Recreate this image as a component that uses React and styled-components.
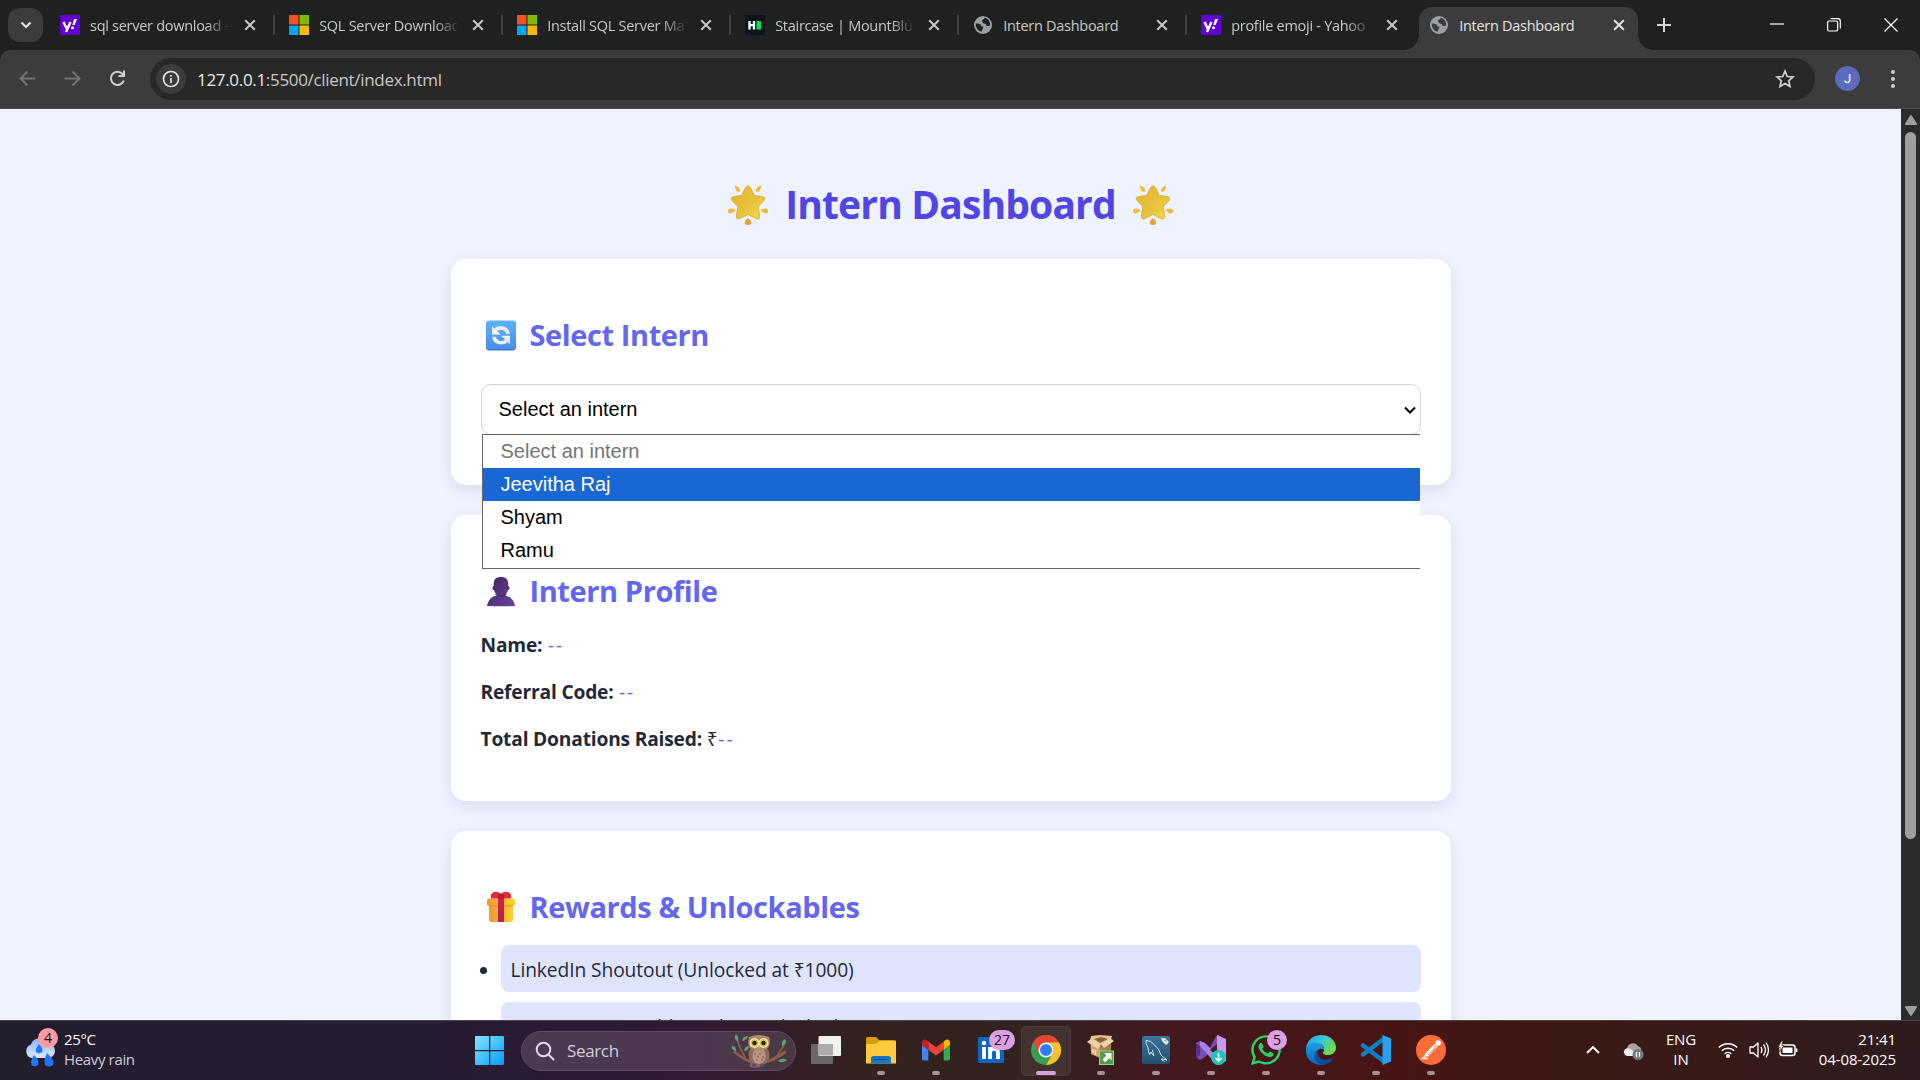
import React from "react";
import styled, { createGlobalStyle, css } from "styled-components";
import { FaWhatsapp } from "react-icons/fa";

const ui = `"Open Sans", "Noto Sans", sans-serif`;

const GlobalStyle = createGlobalStyle`
  * { box-sizing: border-box; }
  html, body { margin: 0; padding: 0; overflow: hidden; background: #1f2120; }
  h1, h2, p, ul { margin: 0; padding: 0; }
  svg { display: block; flex: none; overflow: visible; }
`;

const Screen = styled.div`
  width: 1920px;
  height: 1080px;
  display: flex;
  flex-direction: column;
  overflow: hidden;
  font-family: ${ui};
`;

/* ---------- browser chrome ---------- */

const TabStrip = styled.header`
  height: 50px;
  flex: none;
  display: flex;
  padding-left: 8px;
  background: #1f2120;
  color: #c7c7c7;
`;

const TabSearch = styled.div`
  width: 35px;
  height: 34px;
  margin: 8px 3px 0 0;
  border-radius: 12px;
  background: #3c3c3c;
  display: flex;
  align-items: center;
  justify-content: center;
`;

const TabTitle = styled.div`
  width: ${(p) => p.$width}px;
  overflow: hidden;
  white-space: nowrap;
  font-size: 14.5px;
  letter-spacing: -0.28px;
  line-height: 24px;
  padding-top: 1px;
  margin-right: 15px;
  ${(p) => p.$fade && css`mask-image: linear-gradient(90deg, #000 115px, transparent 141px);`}
`;

const Tab = styled.div`
  width: 228px;
  height: 50px;
  flex: none;
  display: flex;
  align-items: center;
  position: relative;
  padding-left: 14px;
  &:nth-child(2) { width: 229.2px; }
  ${(p) =>
    p.$active &&
    css`
      color: #e3e3e3;
      isolation: isolate;
      &::before {
        content: "";
        position: absolute;
        z-index: -1;
        left: 4px;
        right: 5px;
        top: 7px;
        bottom: 0;
        border-radius: 13px 13px 0 0;
        background: #3c3c3c;
      }
      &::after {
        content: "";
        position: absolute;
        z-index: -1;
        left: -11px;
        right: -10px;
        bottom: 0;
        height: 15px;
        background:
          radial-gradient(circle at 0 0, transparent 14.5px, #3c3c3c 15px) left / 15px 15px no-repeat,
          radial-gradient(circle at 100% 0, transparent 14.5px, #3c3c3c 15px) right / 15px 15px no-repeat;
      }
    `}
`;

const Favicon = styled.div`
  width: 20px;
  height: 20px;
  margin-right: 10px;
  flex: none;
  display: flex;
`;

const TabDivider = styled.div`
  width: 2px;
  height: 20px;
  margin-left: 17px;
  border-radius: 1px;
  background: #414241;
`;

const NewTab = styled.div`
  width: 42px;
  display: flex;
  align-items: center;
  justify-content: center;
`;

const WindowControls = styled.div`
  margin-left: auto;
  display: flex;
  align-items: center;
  gap: 43px;
  padding-right: 22px;
`;

const ToolbarBack = styled.div`
  flex: none;
  background: #1f2120;
`;

const Toolbar = styled.div`
  height: 59px;
  display: flex;
  align-items: center;
  padding: 0 24px 1px 18px;
  background: #3c3c3c;
  border-bottom: 1px solid #4b4b4d;
  border-radius: 10px 10px 0 0;
`;

const NavButtons = styled.div`
  width: 132px;
  display: flex;
  align-items: center;
  gap: 26px;
`;

const Omnibox = styled.div`
  flex: 1;
  height: 42px;
  border-radius: 21px;
  background: #282828;
  display: flex;
  align-items: center;
  padding: 0 20px 0 6px;
`;

const SiteInfo = styled.div`
  width: 30px;
  height: 30px;
  border-radius: 50%;
  background: #3c3c3c;
  display: flex;
  align-items: center;
  justify-content: center;
  margin-right: 11px;
`;

const Url = styled.div`
  flex: 1;
  padding-top: 1px;
  font-size: 17px;
  letter-spacing: -0.32px;
  color: #c7c7c7;
  b { font-weight: 400; color: #e8e8e8; }
`;

const Avatar = styled.div`
  width: 25px;
  height: 25px;
  margin: 0 30px 0 20px;
  border-radius: 50%;
  background: #5c6bc0;
  color: #fff;
  font: 13px/25px Roboto, sans-serif;
  text-align: center;
`;

/* ---------- page ---------- */

const Viewport = styled.div`
  height: 911px;
  flex: none;
  display: flex;
  overflow: hidden;
`;

const Page = styled.main`
  width: 1901px;
  height: 911px;
  overflow: hidden;
  display: flex;
  flex-direction: column;
  align-items: center;
  gap: 30px;
  padding-top: 69px;
  background: #eff3ff;
  color: #1f2937;
`;

const Title = styled.h1`
  display: flex;
  align-items: center;
  gap: 17px;
  height: 51px;
  font-size: 39px;
  line-height: 51px;
  letter-spacing: -0.85px;
  color: #4f46e5;
  white-space: nowrap;
  svg { margin-top: 2px; }
`;

const Card = styled.section`
  width: 1000px;
  height: ${(p) => p.$height}px;
  flex: none;
  padding: 55px 30px 0;
  border-radius: 15px;
  background: #fff;
  box-shadow: 0 5px 15px rgba(30, 30, 80, 0.1);
`;

const Heading = styled.h2`
  display: flex;
  align-items: center;
  height: 41px;
  gap: 13px;
  padding-left: 4px;
  font-size: 29px;
  line-height: 41px;
  letter-spacing: -0.4px;
  color: #6366f1;
  white-space: nowrap;
  svg { margin-top: 2px; }
`;

const SelectWrap = styled.div`
  position: relative;
  margin-top: 29px;
  font-family: "Liberation Sans", Arial, sans-serif;
  font-size: 20px;
  color: #000;
`;

const SelectBox = styled.div`
  height: 51px;
  border: 1px solid #d1d5db;
  border-radius: 10px;
  padding: 0 4px 0 17px;
  display: flex;
  align-items: center;
  justify-content: space-between;
  background: #fff;
`;

const Options = styled.div`
  position: absolute;
  z-index: 2;
  left: 1px;
  right: 1px;
  top: 50px;
  padding-bottom: 1px;
  border: 1px solid #666;
  border-right: 0;
  background: #fff;
`;

const Option = styled.div`
  height: 33px;
  padding-left: 18px;
  line-height: 33px;
  color: ${(p) => (p.$state === "disabled" ? "#757575" : p.$state === "hover" ? "#fff" : "#000")};
  background: ${(p) => (p.$state === "hover" ? "#1967d2" : "#fff")};
`;

const Fields = styled.div`
  display: flex;
  flex-direction: column;
  gap: 20px;
  margin-top: 20px;
`;

const Field = styled.p`
  font-size: 19.2px;
  line-height: 28px;
  height: 27px;
  letter-spacing: -0.1px;
  b { letter-spacing: -0.19px; }
  span { color: #6366f1; letter-spacing: 2px; margin-left: 0.5px; }
`;

const Rewards = styled.ul`
  list-style: none;
  display: flex;
  flex-direction: column;
  gap: 10px;
  margin: 18px 0 0 -1px;
`;

const Reward = styled.li`
  display: flex;
  align-items: center;
  gap: 14px;
  &::before {
    content: "";
    width: 7px;
    height: 7px;
    margin-top: 4px;
    border-radius: 50%;
    background: #1f2937;
  }
`;

const RewardText = styled.div`
  flex: 1;
  height: 47px;
  padding-left: 10px;
  border-radius: 8px;
  background: #e0e5ff;
  font-size: 19.2px;
  line-height: 49px;
  letter-spacing: -0.09px;
`;

const Scrollbar = styled.div`
  width: 19px;
  height: 911px;
  padding: 6px 0 4px;
  background: #2b2b2b;
  display: flex;
  flex-direction: column;
  align-items: center;
`;

const Thumb = styled.div`
  width: 11px;
  height: 707px;
  margin: 7px 0 auto;
  border-radius: 6px;
  background: #9f9f9f;
`;

/* ---------- taskbar ---------- */

const Taskbar = styled.footer`
  height: 60px;
  flex: none;
  display: flex;
  align-items: center;
  padding: 0 24px;
  border-top: 1px solid #4c4649;
  color: #fff;
  background: linear-gradient(90deg, #231e2e 0, #241c31 350px, #2b1a34 600px, #341b30 730px, #33221f 860px, #32231f 1030px, #43181f 1170px, #471513 1380px, #3f1712 1500px, #351b19 1740px, #2e1b1f 1920px);
`;

const Weather = styled.div`
  display: flex;
  align-items: center;
  gap: 5px;
  width: 451px;
`;

const Stack = styled.div`
  display: flex;
  flex-direction: column;
  align-items: ${(p) => p.$align || "flex-start"};
  margin-left: ${(p) => (p.$align === "flex-end" ? "auto" : "0")};
  padding-bottom: 3px;
  font-size: 15px;
  line-height: 20px;
  letter-spacing: ${(p) => p.$track || -0.1}px;
  white-space: nowrap;
  span { color: #cfcbd2; }
`;

const SearchPill = styled.div`
  width: 275px;
  height: 40px;
  margin: 0 12px 0 16px;
  padding: 0 8px 0 13px;
  border: 1px solid #5e4d62;
  border-radius: 20px;
  background: linear-gradient(90deg, #493a51, #4d3650 60%, #4a3843);
  display: flex;
  align-items: center;
  color: #d4ccd6;
  font-size: 17px;
  letter-spacing: -0.35px;
  b { flex: 1; font-weight: 400; margin-left: 12px; }
`;

const Apps = styled.div`
  display: flex;
  gap: 5px;
  margin-left: -7px;
`;

const AppButton = styled.div`
  position: relative;
  width: 50px;
  height: 50px;
  padding-bottom: 1px;
  border-radius: 5px;
  display: flex;
  align-items: center;
  justify-content: center;
  border: 1px solid ${(p) => (p.$run === "active" ? "#4d3c3a" : "transparent")};
  background: ${(p) => (p.$run === "active" ? "#433330" : "transparent")};
  &::after {
    content: "";
    display: ${(p) => (p.$run ? "block" : "none")};
    position: absolute;
    bottom: 0;
    width: ${(p) => (p.$run === "active" ? 20 : 8)}px;
    height: 4px;
    border-radius: 2px;
    background: ${(p) => (p.$run === "active" ? "#d99fe0" : "#a09494")};
  }
`;

const Badge = styled.div`
  position: absolute;
  left: ${(p) => p.$x}px;
  top: ${(p) => p.$y}px;
  min-width: 20px;
  height: 20px;
  padding: 0 5px;
  border-radius: 10px;
  background: ${(p) => p.$color || "#dc9fe3"};
  color: #16101a;
  font-size: 14px;
  line-height: 20px;
  text-align: center;
`;

const WeatherIcon = styled.div`
  position: relative;
  width: 35px;
  height: 35px;
`;

const Tray = styled.div`
  margin-left: auto;
  display: flex;
  align-items: center;
`;

const TraySlot = styled.div`
  width: ${(p) => p.$w}px;
  padding-bottom: ${(p) => p.$lift || 0}px;
  display: flex;
  justify-content: center;
`;

/* ---------- icons ---------- */

const Cross = () => (
  <svg width="12" height="12" viewBox="0 0 12 12" stroke="currentColor" strokeWidth="2">
    <path d="M1.200 1.200l9.600 9.600M10.800 1.200l-9.600 9.600" />
  </svg>
);

const YahooIcon = () => (
  <svg width="20" height="20" viewBox="0 0 20 20">
    <rect width="20" height="20" fill="#6001d2" />
    <path d="M3.5 7l3.2 6.5M10.5 7L6 17" stroke="#fff" strokeWidth="2.5" fill="none" />
    <path d="M14 4h3l-2.3 6h-2.3z" fill="#fff" />
    <circle cx="12.5" cy="12.8" r="1.5" fill="#fff" />
  </svg>
);

const MicrosoftIcon = () => (
  <svg width="20" height="20" viewBox="0 0 20 20">
    <path fill="#f25022" d="M0 0h9.5v9.5H0z" />
    <path fill="#7fba00" d="M10.5 0H20v9.5h-9.5z" />
    <path fill="#00a4ef" d="M0 10.5h9.5V20H0z" />
    <path fill="#ffb900" d="M10.5 10.5H20V20h-9.5z" />
  </svg>
);

const HackerIcon = () => (
  <svg width="20" height="20" viewBox="0 0 20 20">
    <rect width="20" height="20" fill="#0e141e" />
    <path d="M4.5 6v8.5M9 6v8.5M4.5 10.2H9" stroke="#fff" strokeWidth="2.3" />
    <path d="M11.5 6H16v8.5h-4.5z" fill="#05e05f" />
  </svg>
);

const GlobeIcon = ({ ink }) => (
  <svg width="20" height="20" viewBox="0 0 20 20">
    <circle cx="10" cy="10" r="9" fill="#9aa0a6" />
    <path
      fill={ink}
      d="M2.8 8.4c1.6 0 3.5.2 4.6 1.2.8.7.5 1.8 1.7 2 .9.1 1.4.3 1.2 1.2-.2.8-1 1-1.1 1.8 0 .6-.1 1.9-.6 1.9C5 16 2.600 12.8 2.800 8.400zM11.300 2.700c.3 1-.3 1.500-1.200 1.700-1 .3-1 .9-1 1.600 0 .6.700.8.6 1.500-.1.8.8 1.300 1.900 1.200 1 0 1.500.4 1.600 1.200.2 1 1 1 2 1 1 0 1.400-.3 2-.9C17.300 6.300 15 3.300 11.300 2.700z"
    />
  </svg>
);

const StarEmoji = () => (
  <svg width="40" height="40" viewBox="0 0 40 40">
    <defs>
      <linearGradient id="sg" x1="0" y1="0" x2="1" y2="1">
        <stop offset="0" stopColor="#e9b52f" />
        <stop offset=".55" stopColor="#e7c13c" />
        <stop offset="1" stopColor="#f9de3a" />
      </linearGradient>
    </defs>
    <g fill="#f2ba35">
      <path d="M7 2q-1-1.500.8-1.300l2.500 1.500q2.500 2.500 1.800 4-1.500 1.300-4-.5zM33 2q1-1.500-.8-1.300l-2.500 1.500q-2.500 2.500-1.800 4 1.500 1.300 4-.5zM0 27q-.5-3.500 3-3.500 4 .3 4 1.800t-4 3Q.5 29 0 27zM40 27q.5-3.500-3-3.500-4 .3-4 1.800t4 3q2.500.7 3-1.300z" />
      <path fill="#e0a336" d="M20 33.500q2 0 3.300 4Q23.300 40 20 40t-3.300-2.500q1.300-4 3.300-4z" />
    </g>
    <path
      fill="url(#sg)"
      stroke="#d9a02f"
      strokeWidth=".7"
      strokeLinejoin="round"
      d="M17.500 2.500q2.500-3.500 5 0l3.800 7.800 8 1.200q4.200 1 1.600 4.200l-5.700 6 1.500 9.300q.2 4.400-3.800 2.600L20 29.500l-7.900 4.100q-4 1.800-3.800-2.600l1.500-9.300-5.700-6q-2.600-3.200 1.600-4.200l8-1.200z"
    />
  </svg>
);

const RefreshEmoji = () => (
  <svg width="32" height="32" viewBox="0 0 32 32">
    <defs>
      <linearGradient id="rb" x1="0" y1="0" x2="0" y2="1">
        <stop offset="0" stopColor="#5ab4fb" />
        <stop offset="1" stopColor="#4b8ee8" />
      </linearGradient>
    </defs>
    <rect x="1" y="1" width="30" height="29.500" rx="3.500" fill="#3f77d0" />
    <rect x="1" y=".5" width="30" height="28.500" rx="3.500" fill="url(#rb)" />
    <g fill="none" stroke="#eef0ff" strokeWidth="3.600">
      <path d="M10.500 9.800c4.500-3.500 11.500-2 12.700 4" />
      <path d="M21.500 20.800c-4.500 3.500-11.500 2-12.700-4" />
    </g>
    <path fill="#eef0ff" d="M7 6.300v8.500h9zM25 24.300v-8.500h-9z" />
  </svg>
);

const PersonEmoji = () => (
  <svg width="32" height="32" viewBox="0 0 32 32">
    <defs>
      <linearGradient id="pg" x1="0" y1="0" x2="1" y2="1">
        <stop offset="0" stopColor="#3e2660" />
        <stop offset="1" stopColor="#6a42a0" />
      </linearGradient>
    </defs>
    <path
      fill="url(#pg)"
      d="M16 1c5.500 0 7.500 2.500 7.300 9 1.700 0 1.700 4-.3 4-.8 3-2.500 4.500-3.300 5.500 5.500.7 9.300 4.500 10.300 10.500q-14 .5-28 0c1-6 4.800-9.800 10.300-10.500C11.500 18.500 9.800 17 9 14c-2 0-2-4-.3-4C8.500 3.500 10.500 1 16 1z"
    />
    <path d="M10.500 18.500q5.500 3.500 11 0" stroke="#35205a" strokeWidth="1" fill="none" />
  </svg>
);

const GiftEmoji = () => (
  <svg width="32" height="32" viewBox="0 0 32 32">
    <defs>
      <linearGradient id="gg">
        <stop offset="0" stopColor="#ee9a35" />
        <stop offset="1" stopColor="#fbd32b" />
      </linearGradient>
      <linearGradient id="gr" x1="0" y1="0" x2="0" y2="1">
        <stop offset="0" stopColor="#d5243c" />
        <stop offset="1" stopColor="#b61d66" />
      </linearGradient>
    </defs>
    <g transform="translate(0 -1)">
      <rect x="4" y="12" width="24" height="19" rx="2.500" fill="url(#gg)" />
      <rect x="2" y="7.500" width="28" height="7.500" rx="1.800" fill="url(#gg)" />
      <path d="M4 15h24" stroke="#d88a2a" strokeWidth="1" />
      <path d="M13 7h6v24h-6z" fill="url(#gr)" />
      <path
        fill="#e02d3e"
        d="M16 3c2-2.500 6-3 8-1.500 2.500 1.500 2.800 4.500 1.500 6h-19C5 6 5.500 3 8 1.500 10 0 14 .5 16 3z"
      />
      <path fill="#b71d37" d="M13 4q3-3 6 0v4h-6z" />
    </g>
  </svg>
);

const RainIcon = () => (
  <svg width="35" height="35" viewBox="0 0 35 35">
    <defs>
      <linearGradient id="cl" x1="0" y1="0" x2="0" y2="1">
        <stop offset="0" stopColor="#8db4f4" />
        <stop offset="1" stopColor="#dce9ff" />
      </linearGradient>
    </defs>
    <path fill="url(#cl)" d="M8 25a7 7 0 0 1-1-13.500 9 9 0 0 1 17-.5c5 0 7 3.500 7 7s-3 7-7 7z" />
    <g fill="#1f76ff">
      <path d="M15 11q5 5 3 8-3 2.500-6 0-1-3 3-8zM10 22q6 6 4 10-3.500 2.500-6.500 0-1.500-4 2.500-10zM23 20q8 7 6 12-4 3-8 0-1.500-5 2-12z" />
    </g>
  </svg>
);

const WindowsIcon = () => (
  <svg width="30" height="30" viewBox="0 0 30 30">
    <defs>
      <linearGradient id="win" x1="0" y1="0" x2="1" y2="1">
        <stop offset="0" stopColor="#8be3ff" />
        <stop offset=".5" stopColor="#3fc4fb" />
        <stop offset="1" stopColor="#0a96f7" />
      </linearGradient>
    </defs>
    <path fill="url(#win)" d="M0 1q0-1 1-1h13v14H0zM15.300 0H28q1 0 1 1v13H15.300zM0 15.300h14V29H1q-1 0-1-1zM15.300 15.300H29V28q0 1-1 1H15.300z" />
  </svg>
);

const OwlIcon = () => (
  <svg width="56" height="34" viewBox="0 0 56 34">
    <g fill="none" stroke="#8a5d49" strokeLinecap="round">
      <path d="M4 18q10 9 20 11 16 0 30-11" strokeWidth="3" />
      <path d="M6 4q2 10 8 19M46 22l7-11" strokeWidth="1.700" />
      <path d="M21 31q5 1 9-1" strokeWidth="5" />
    </g>
    <g fill="#57a568">
      <path d="M5 0q4 4 1 7-4-3-1-7zM1 12q5 1 4 5-5-1-4-5zM11 7q1-5 6-5 0 4-6 5zM13 17q1-5 5-5 0 5-5 5zM51 12q-1-5 3-7 3 5-3 7zM47 27q4-4 9-1-4 4-9 1z" />
    </g>
    <ellipse cx="28" cy="21" rx="10.500" ry="11" fill="#8d6a58" />
    <ellipse cx="28" cy="22" rx="6.500" ry="8" fill="#b79784" />
    <path d="M18 3q10-4 20 0 2 7-1 11-9 5-18 0-3-4-1-11z" fill="#b28a63" />
    <circle cx="23.500" cy="9" r="5" fill="#ece0bd" />
    <circle cx="32.500" cy="9" r="5" fill="#ece0bd" />
    <g fill="#26241b" stroke="#d6bb2e" strokeWidth="1.200">
      <circle cx="23.500" cy="9" r="2.800" />
      <circle cx="32.500" cy="9" r="2.800" />
    </g>
    <path d="M26.500 11h3L28 15z" fill="#e9b660" />
    <path d="M21 31h4M29 31h4" stroke="#4d4aa6" strokeWidth="2.500" />
    <path d="M23 20h2m3 0h2m-4 3h2m3 0h2m-8 3h2m3 0h2" stroke="#7d5d4e" strokeWidth="1" />
  </svg>
);

const TaskViewIcon = () => (
  <svg width="30" height="28" viewBox="0 0 30 28">
    <rect x="0" y="8" width="22" height="20" rx="1" fill="#6c6868" />
    <rect x="7.500" y="0" width="22.500" height="20" rx="1" fill="#f2f2f2" />
    <path d="M7.500 8H22v11.500H7.500z" fill="#adabab" />
  </svg>
);

const FolderIcon = () => (
  <svg width="30" height="27" viewBox="0 0 30 27">
    <path fill="#d99a08" d="M0 2q0-2 2-2h8l3 3h15q2 0 2 2v6H0z" />
    <path fill="#fecb3e" d="M0 7h10l3-3h17v22.500H0z" />
    <path fill="#1378c8" d="M5 26.500v-5q0-2.500 2.500-2.500h15q2.500 0 2.500 2.500v5z" />
    <path d="M8.500 22.500h13" stroke="#0b4f90" strokeWidth="1.300" />
  </svg>
);

const GmailIcon = () => (
  <svg width="28" height="22" viewBox="0 0 28 22">
    <path fill="#4285f4" d="M0 6l6.300 4.700V21.500H2Q0 21.500 0 19.500z" />
    <path fill="#34a853" d="M28 6l-6.300 4.700v10.800H26q2 0 2-2z" />
    <path fill="#ea4335" d="M6.300 2.500L14 8.300l7.700-5.800v8.200L14 16.500l-7.700-5.800z" />
    <path fill="#c5221f" d="M0 4Q0 .5 3 .5q1.300 0 3.300 2v8.200L0 6z" />
    <path fill="#fbbc04" d="M28 4q0-3.500-3-3.500-1.300 0-3.300 2v8.200L28 6z" />
  </svg>
);

const LinkedInIcon = () => (
  <svg width="26" height="26" viewBox="0 0 26 26">
    <rect width="26" height="26" rx="2" fill="#0a66c2" />
    <circle cx="6" cy="6" r="2.300" fill="#fff" />
    <path d="M6 10v12M12 10v12M12 16q0-4.500 4.300-4.500 3.700 0 3.700 4.500v6" stroke="#fff" strokeWidth="3.800" fill="none" />
  </svg>
);

const ChromeIcon = () => (
  <svg width="30" height="30" viewBox="0 0 30 30">
    <circle cx="15" cy="15" r="15" fill="#34a04f" />
    <path fill="#ea4335" d="M2 7.500A15 15 0 0 1 28 7.500H15a7.500 7.500 0 0 0-6.500 3.800L8.500 18.800z" />
    <path fill="#fbc02d" d="M28 7.500A15 15 0 0 1 15 30l6.500-11.200a7.500 7.500 0 0 0-6.500-11.300z" />
    <circle cx="15" cy="15" r="7.500" fill="#fff" />
    <circle cx="15" cy="15" r="6" fill="#2f7cf0" />
  </svg>
);

const BoxIcon = () => (
  <svg width="28" height="30" viewBox="0 0 28 30">
    <path fill="#cfa36c" d="M3.500 7L13 10v13L4 19z" />
    <path fill="#a97b48" d="M13 10l11-3v12l-11 4z" />
    <path fill="#e3c294" d="M4 1l9-1 12 1-2 6-10 3L3 6z" />
    <path fill="#8d6539" d="M7 4l7-2 7 2-8 4z" />
    <path fill="#ecd2a8" d="M0 7l4-3 10 5-3 5zM27 6l-4-3-9 6 3 4z" />
    <path d="M6 14v4M8.500 15v5" stroke="#f4e3c2" strokeWidth="1.600" />
    <rect x="12.500" y="16" width="14" height="13.500" fill="#4f9e43" stroke="#9ad08d" />
    <path fill="#fff" d="M17 18h7.500v7.500l-2.300-2.300-4 4-2.700-2.700 4-4z" />
  </svg>
);

const MySqlIcon = () => (
  <svg width="28" height="28" viewBox="0 0 28 28">
    <defs>
      <linearGradient id="my" x1="0" y1="0" x2="0" y2="1">
        <stop offset="0" stopColor="#38769c" />
        <stop offset="1" stopColor="#24506f" />
      </linearGradient>
    </defs>
    <rect width="28" height="28" rx="2" fill="url(#my)" />
    <path
      d="M4 4.500q5-.5 8.500 4.500 4.500 3 6.500 10 2 2 6 5-4-1-5.500-1 0 1 3 2.500M4 4.500q-1 2 2 7 0 3 1.500 7l1.500-2.500q1 2.500 3 4-1.500-4-1.500-6"
      fill="none"
      stroke="#d6e7f0"
      strokeWidth="1"
      strokeLinejoin="round"
    />
    <path d="M20 2.500l1 2.500 3 3 2-2-3-3zM21 4l4 4" stroke="#fff" strokeWidth="1.300" fill="none" />
  </svg>
);

const VisualStudioIcon = () => (
  <svg width="30" height="30" viewBox="0 0 30 30">
    <path fill="#7650b4" d="M0 8l4-2 9 8 8-14 2 0v7L9 22l-5 3-4-3z" />
    <path fill="#52308b" d="M0 8l4 3v9l-4 3z" />
    <path fill="#a981e4" d="M4 6l5 2 14 14v8h-2L4 11z" />
    <path fill="#ca96fa" d="M21 0l9 4v22l-9 4z" />
    <path fill="#45161e" d="M14 15l7-6v12z" />
    <circle cx="22.500" cy="22.500" r="7.500" fill="#20c5b5" />
    <path d="M22.500 18v8M19.500 23l3 3 3-3" stroke="#fff" strokeWidth="1.600" fill="none" />
  </svg>
);

const EdgeIcon = () => (
  <svg width="30" height="30" viewBox="0 0 30 30">
    <defs>
      <linearGradient id="e1" x1="0" y1="0" x2="1" y2=".5">
        <stop offset="0" stopColor="#1d9be0" />
        <stop offset=".5" stopColor="#35c6dc" />
        <stop offset="1" stopColor="#6edb4c" />
      </linearGradient>
      <linearGradient id="e2" x1="0" y1="0" x2="0" y2="1">
        <stop offset="0" stopColor="#1aa0e8" />
        <stop offset="1" stopColor="#0b62bd" />
      </linearGradient>
    </defs>
    <path fill="url(#e1)" d="M0 14C1 5 7 0 15 0c9 0 15 6 15 12.500 0 5-4 7.500-8 7.500-4.500 0-5.500-1.500-4.500-3C19 14 18 10 14 9 9 8 2 9 0 14z" />
    <path fill="url(#e2)" d="M0 14C2 8.500 7 7 12 8c4 .8 6.500 4 6 7-4-3-7 0-7 4 0 6 5 10 9 10.300C10 32-1 26 0 14z" />
    <path fill="#0d4ba0" d="M12 14.500c-2 8 5 13 15.500 8.500C24 29 17 31.500 12 28 7 24 8 17 12 14.500z" />
  </svg>
);

const VsCodeIcon = () => (
  <svg width="30" height="30" viewBox="0 0 30 30">
    <path d="M2 10.500L22.500 26M2 19.500L22.500 4" stroke="#0f7cc4" strokeWidth="4.500" strokeLinecap="round" />
    <path fill="#27a2ef" d="M21.500 0L30 3.500v23L21.500 30z" />
  </svg>
);

const PostmanIcon = () => (
  <svg width="30" height="30" viewBox="0 0 30 30">
    <circle cx="15" cy="15" r="15" fill="#ff6c37" />
    <circle cx="22" cy="8" r="2.800" fill="#fff" />
    <path d="M20 10.500L10 20.500" stroke="#fff" strokeWidth="4" />
    <path d="M12 18l-5.500 5.500h5" stroke="#fff" strokeWidth="1.500" fill="none" />
    <path d="M20 12l-8 8M18 11l2 2" stroke="#ff6c37" strokeWidth=".9" />
  </svg>
);

const tabs = [
  { icon: <YahooIcon />, title: "sql server download -", fade: true, width: 142.5 },
  { icon: <MicrosoftIcon />, title: "SQL Server Download", fade: true, width: 143.5 },
  { icon: <MicrosoftIcon />, title: "Install SQL Server Ma", fade: true, width: 143.5 },
  { icon: <HackerIcon />, title: "Staircase | MountBlue", fade: true, width: 143.5 },
  { icon: <GlobeIcon ink="#1f2120" />, title: "Intern Dashboard", width: 143 },
  { icon: <YahooIcon />, title: "profile emoji - Yahoo", fade: true, width: 139.5 },
  { icon: <GlobeIcon ink="#3c3c3c" />, title: "Intern Dashboard", active: true, width: 138.5 },
];

const options = [
  { label: "Select an intern", state: "disabled" },
  { label: "Jeevitha Raj", state: "hover" },
  { label: "Shyam" },
  { label: "Ramu" },
];

const apps = [
  { icon: <TaskViewIcon /> },
  { icon: <FolderIcon />, run: "idle" },
  { icon: <GmailIcon />, run: "idle" },
  { icon: <LinkedInIcon />, badge: "27" },
  { icon: <ChromeIcon />, run: "active" },
  { icon: <BoxIcon />, run: "idle" },
  { icon: <MySqlIcon />, run: "idle" },
  { icon: <VisualStudioIcon />, run: "idle" },
  { icon: <FaWhatsapp size={34} color="#25d366" />, run: "idle", badge: "5" },
  { icon: <EdgeIcon />, run: "idle" },
  { icon: <VsCodeIcon />, run: "idle" },
  { icon: <PostmanIcon />, run: "idle" },
];

export default function App() {
  return (
    <Screen>
      <GlobalStyle />
      <TabStrip>
        <TabSearch>
          <svg width="12" height="8" viewBox="0 0 12 8" fill="none" stroke="#e3e3e3" strokeWidth="2.200">
            <path d="M1.500 1.500L6 6l4.500-4.500" />
          </svg>
        </TabSearch>
        {tabs.map((t, i) => (
          <Tab key={i} $active={t.active}>
            <Favicon>{t.icon}</Favicon>
            <TabTitle $fade={t.fade} $width={t.width}>{t.title}</TabTitle>
            <Cross />
            {i < 5 && <TabDivider />}
          </Tab>
        ))}
        <NewTab>
          <svg width="14" height="14" viewBox="0 0 14 14" stroke="#d5d5d5" strokeWidth="2">
            <path d="M7 0v14M0 7h14" />
          </svg>
        </NewTab>
        <WindowControls>
          <svg width="14" height="14" viewBox="0 0 14 14" stroke="#fff" strokeWidth="1.200">
            <path d="M0 6h14" />
          </svg>
          <svg width="14" height="14" viewBox="0 0 14 14" fill="none" stroke="#fff" strokeWidth="1.200">
            <rect x=".6" y="3" width="10" height="10" rx="1.500" />
            <path d="M3.500.7H11q2.300 0 2.300 2.300v7.500" />
          </svg>
          <svg width="14" height="14" viewBox="0 0 14 14" stroke="#fff" strokeWidth="1.300">
            <path d="M.5.5l13 13M13.500.5L.5 13.500" />
          </svg>
        </WindowControls>
      </TabStrip>
      <ToolbarBack>
        <Toolbar>
          <NavButtons>
            <svg width="19" height="19" viewBox="0 0 19 19" fill="none" stroke="#757575" strokeWidth="1.900">
              <path d="M17.500 9.500H3M9.500 2.500l-7 7 7 7" />
            </svg>
            <svg width="19" height="19" viewBox="0 0 19 19" fill="none" stroke="#757575" strokeWidth="1.900">
              <path d="M1.500 9.500H16M9.500 2.500l7 7-7 7" />
            </svg>
            <svg width="19" height="19" viewBox="0 0 19 19" fill="none" stroke="#d0d0d0" strokeWidth="2">
              <path d="M15.800 11.500A6.600 6.600 0 1 1 14.500 5L16 6.500" />
              <path d="M16 1.500V7h-5.500" />
            </svg>
          </NavButtons>
          <Omnibox>
            <SiteInfo>
              <svg width="18" height="18" viewBox="0 0 18 18" fill="none" stroke="#e3e3e3" strokeWidth="1.700">
                <circle cx="9" cy="9" r="7.500" />
                <path d="M9 8v5M9 5v1.800" />
              </svg>
            </SiteInfo>
            <Url>
              <b>127.0.0.1</b>:5500/client/index.html
            </Url>
            <svg width="20" height="20" viewBox="0 0 20 20" fill="none" stroke="#d0d0d0" strokeWidth="1.700">
              <path d="M10 2.200l2.300 5.300 5.700.5-4.300 3.800 1.300 5.700-5-3-5 3 1.300-5.700L2 8l5.700-.5z" />
            </svg>
          </Omnibox>
          <Avatar>J</Avatar>
          <svg width="6" height="22" viewBox="0 0 6 22" fill="#d0d0d0">
            <circle cx="3" cy="4" r="2" />
            <circle cx="3" cy="11" r="2" />
            <circle cx="3" cy="18" r="2" />
          </svg>
        </Toolbar>
      </ToolbarBack>

      <Viewport>
        <Page>
          <Title>
            <StarEmoji />
            <span>Intern Dashboard</span>
            <StarEmoji />
          </Title>
          <Card $height={226}>
            <Heading>
              <RefreshEmoji />
              Select Intern
            </Heading>
            <SelectWrap>
              <SelectBox>
                Select an intern
                <svg width="12" height="8" viewBox="0 0 12 8" fill="none" stroke="#000" strokeWidth="2">
                  <path d="M1 1.500l5 5 5-5" />
                </svg>
              </SelectBox>
              <Options>
                {options.map((o) => (
                  <Option key={o.label} $state={o.state}>{o.label}</Option>
                ))}
              </Options>
            </SelectWrap>
          </Card>
          <Card $height={286}>
            <Heading>
              <PersonEmoji />
              Intern Profile
            </Heading>
            <Fields>
              <Field><b>Name:</b> <span>--</span></Field>
              <Field><b>Referral Code:</b> <span>--</span></Field>
              <Field><b>Total Donations Raised:</b> ₹<span>--</span></Field>
            </Fields>
          </Card>
          <Card $height={400}>
            <Heading>
              <GiftEmoji />
              Rewards &amp; Unlockables
            </Heading>
            <Rewards>
              <Reward><RewardText>LinkedIn Shoutout (Unlocked at ₹1000)</RewardText></Reward>
              <Reward><RewardText>Company Wearable Badge (Unlocked at ₹5000)</RewardText></Reward>
            </Rewards>
          </Card>
        </Page>
        <Scrollbar>
          <svg width="12" height="10" viewBox="0 0 12 10" fill="#9f9f9f">
            <path d="M6 0q.6 0 1 .7l5 8q.3 1.300-1 1.300H1q-1.300 0-1-1.300l5-8Q5.400 0 6 0z" />
          </svg>
          <Thumb />
          <svg width="12" height="10" viewBox="0 0 12 10" fill="#9f9f9f">
            <path d="M6 10q-.6 0-1-.7l-5-8Q-.3 0 1 0h10q1.300 0 1 1.300l-5 8q-.4.700-1 .7z" />
          </svg>
        </Scrollbar>
      </Viewport>

      <Taskbar>
        <Weather>
          <WeatherIcon>
            <RainIcon />
            <Badge $x={14} $y={-5} $color="#ff99a4">4</Badge>
          </WeatherIcon>
          <Stack $track={-0.35}>
            <div>25°C</div>
            <span>Heavy rain</span>
          </Stack>
        </Weather>
        <WindowsIcon />
        <SearchPill>
          <svg width="20" height="20" viewBox="0 0 20 20" fill="none" stroke="#e0d8e2" strokeWidth="2">
            <circle cx="8.500" cy="8.500" r="6.800" />
            <path d="M13.500 13.500l5 5" strokeLinecap="round" />
          </svg>
          <b>Search</b>
          <OwlIcon />
        </SearchPill>
        <Apps>
          {apps.map((a, i) => (
            <AppButton key={i} $run={a.run}>
              {a.icon}
              {a.badge && <Badge $x={a.badge.length > 1 ? 22 : 25} $y={3}>{a.badge}</Badge>}
            </AppButton>
          ))}
        </Apps>
        <Tray>
          <TraySlot $w={30} $lift={2}>
            <svg width="14" height="8" viewBox="0 0 14 8" fill="none" stroke="#fff" strokeWidth="1.800">
              <path d="M1 7l6-6 6 6" />
            </svg>
          </TraySlot>
          <TraySlot $w={50}>
            <svg width="20" height="18" viewBox="0 0 20 18">
              <path fill="#aaa3a2" d="M4 7a6 6 0 0 1 11-3q3 1 3.500 4L8 12z" />
              <path fill="#f2f0f0" d="M4 14a4 4 0 0 1-1-7.500q3-.8 5 1L17 14z" />
              <circle cx="15" cy="12.500" r="5.500" fill="#777c80" />
              <path d="M13.500 10v5M16.500 10v5" stroke="#fff" strokeWidth="1.200" />
            </svg>
          </TraySlot>
          <TraySlot $w={46}>
            <Stack $align="center">
              <div>ENG</div>
              <div>IN</div>
            </Stack>
          </TraySlot>
          <TraySlot $w={8} />
          <TraySlot $w={32} $lift={2}>
            <svg width="20" height="16" viewBox="0 0 20 16" fill="none" stroke="#fff" strokeWidth="1.500">
              <path d="M.8 5.500a13 13 0 0 1 18.400 0M3.800 8.800a8.800 8.800 0 0 1 12.400 0M6.700 11.800a4.700 4.700 0 0 1 6.600 0" />
              <circle cx="10" cy="14" r="1.300" fill="#fff" />
            </svg>
          </TraySlot>
          <TraySlot $w={29} $lift={2}>
            <svg width="20" height="18" viewBox="0 0 20 18" fill="none" stroke="#fff" strokeWidth="1.300" strokeLinejoin="round">
              <path d="M1 6h3.500L9 2v14l-4.500-4H1zM12 6q2 3 0 6M14.500 3.500q4 5.500 0 11M17 1.500q5 7.500 0 15" />
            </svg>
          </TraySlot>
          <TraySlot $w={30} $lift={3}>
            <svg width="20" height="16" viewBox="0 0 20 16">
              <rect x="2" y="4" width="15" height="10.500" rx="2.500" fill="none" stroke="#fff" strokeWidth="1.500" />
              <rect x="4.500" y="6.500" width="10" height="5.500" fill="#fff" />
              <path d="M18.500 7.500v3.500" stroke="#fff" strokeWidth="1.800" />
              <path d="M3.500 0L0 6.500h2.500L1.500 11 6 4.500H3.500L5 0z" fill="#fff" stroke="#351b19" strokeWidth=".6" />
            </svg>
          </TraySlot>
          <TraySlot $w={93}>
            <Stack $align="flex-end">
              <div>21:41</div>
              <div>04-08-2025</div>
            </Stack>
          </TraySlot>
        </Tray>
      </Taskbar>
    </Screen>
  );
}
